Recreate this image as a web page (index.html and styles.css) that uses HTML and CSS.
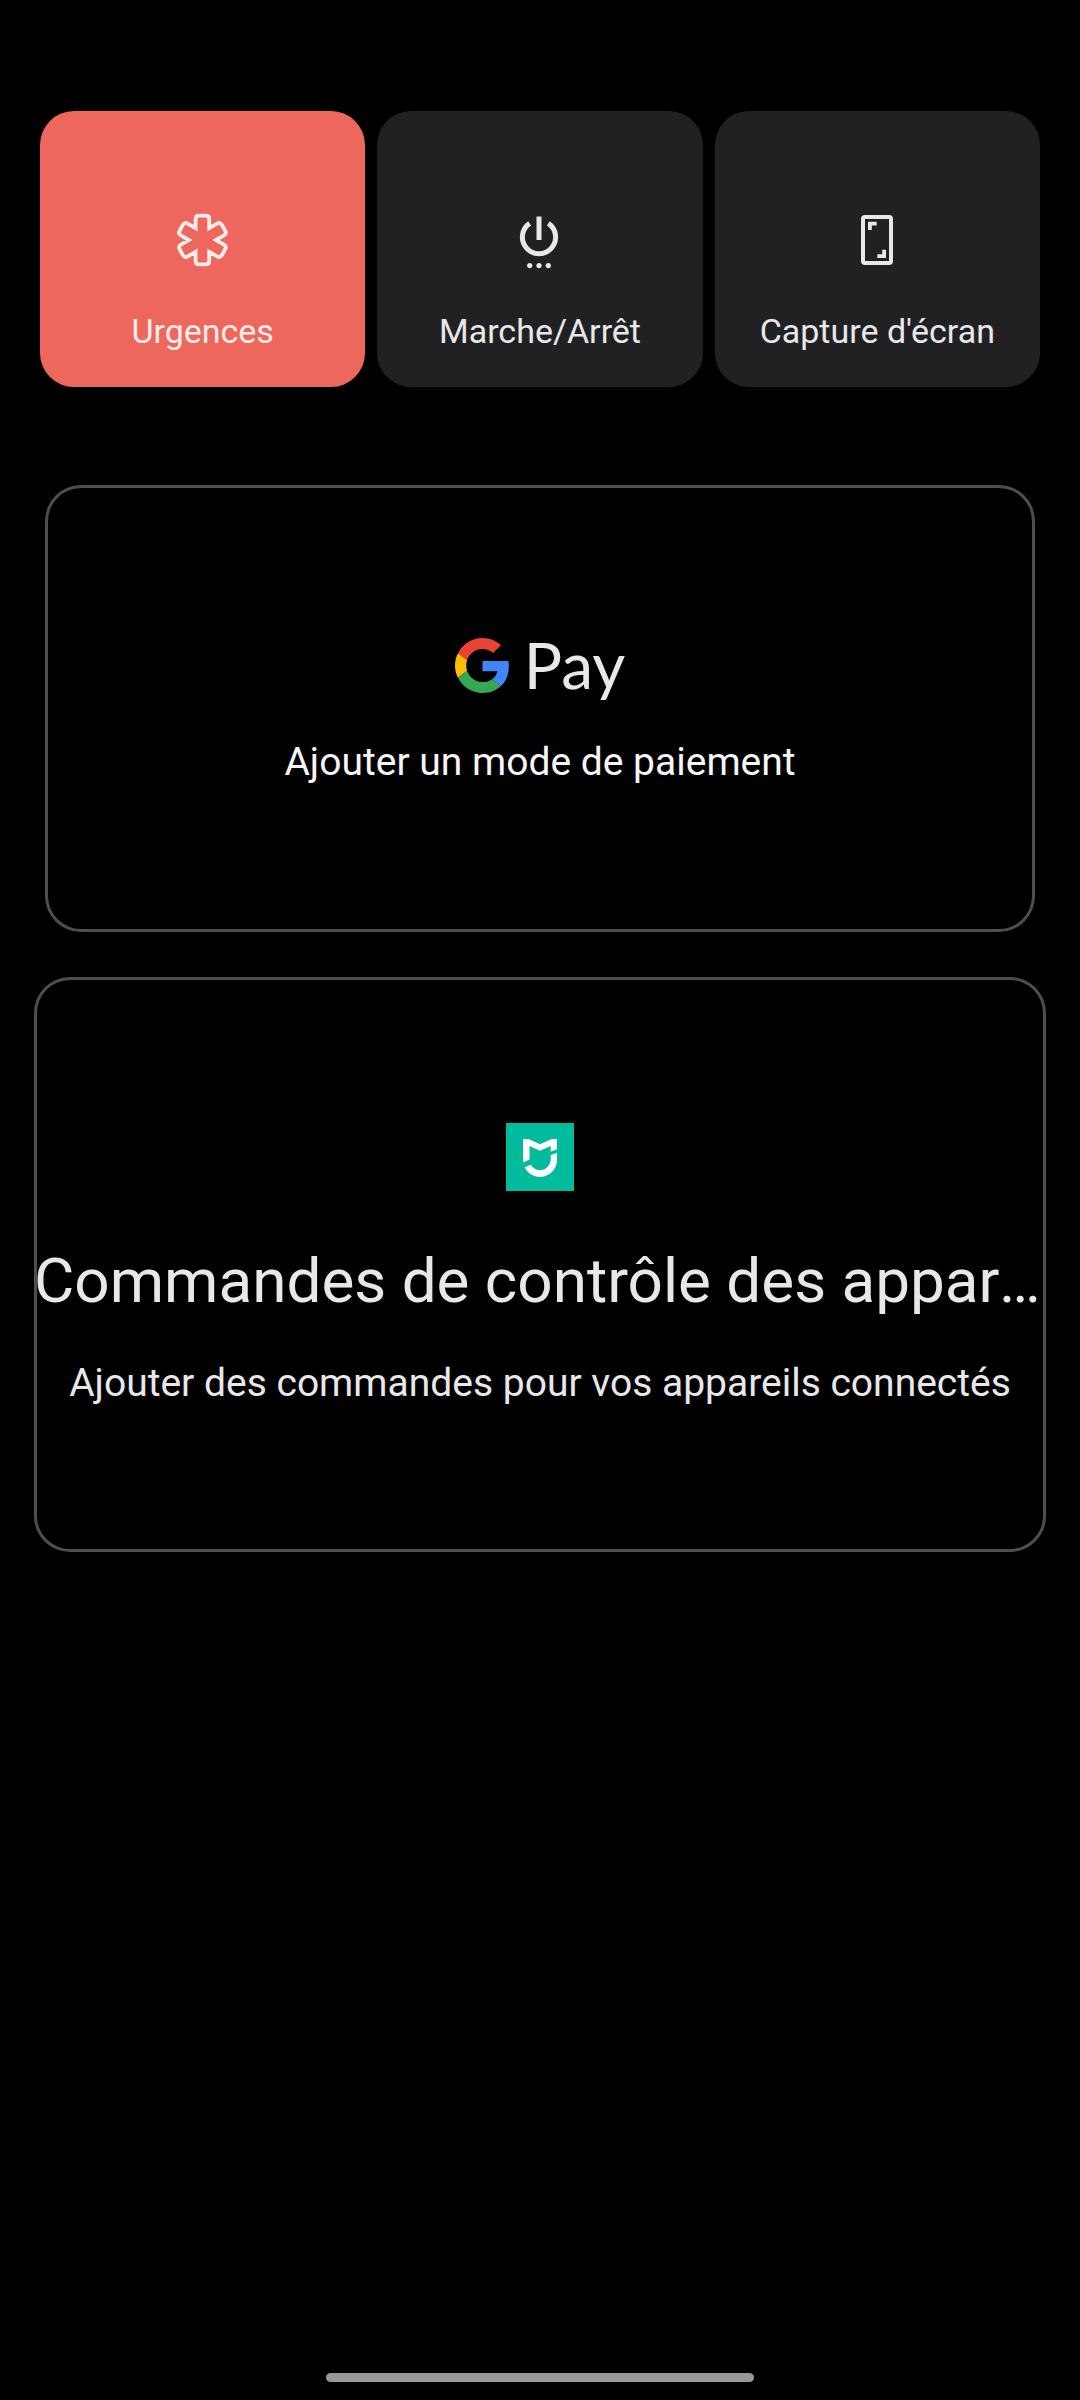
FILE: index.html
```html
<!DOCTYPE html>
<html lang="fr">
<head>
<meta charset="utf-8">
<meta name="viewport" content="width=device-width, initial-scale=1">
<title>Menu Marche/Arrêt</title>
<link rel="stylesheet" href="styles.css">
</head>
<body>
<main class="menu">
  <div class="tiles">
    <button class="tile tile-emergency" type="button">
      <svg class="tile-icon" viewBox="0 0 66 66" aria-hidden="true">
        <path transform="translate(32.4 33)" fill="none" stroke="currentColor" stroke-width="3.8" d="M-6.8-11.8V-20.9Q-6.8-24.4-3.3-24.4H3.3Q6.8-24.4 6.8-20.9V-11.8L14.7-16.3Q17.7-18.1 19.5-15.1L22.8-9.3Q24.5-6.3 21.5-4.6L13.6 0L21.5 4.6Q24.5 6.3 22.8 9.3L19.5 15.1Q17.7 18.1 14.7 16.3L6.8 11.8V20.9Q6.8 24.4 3.3 24.4H-3.3Q-6.8 24.4-6.8 20.9V11.8L-14.7 16.3Q-17.7 18.1-19.5 15.1L-22.8 9.3Q-24.5 6.3-21.5 4.6L-13.6 0L-21.5-4.6Q-24.5-6.3-22.8-9.3L-19.5-15.1Q-17.7-18.1-14.7-16.3Z"/>
      </svg>
      <span class="tile-label">Urgences</span>
    </button>
    <button class="tile" type="button">
      <svg class="tile-icon" viewBox="0 0 66 66" aria-hidden="true">
        <g transform="translate(-1 0)">
          <path fill="none" stroke="currentColor" stroke-width="5" d="M33 9.5V33M23.6 16.4A16.6 16.6 0 1 0 42.4 16.4"/>
          <circle fill="currentColor" cx="23.7" cy="58.6" r="2.6"/>
          <circle fill="currentColor" cx="33" cy="58.6" r="2.6"/>
          <circle fill="currentColor" cx="42.3" cy="58.6" r="2.6"/>
        </g>
      </svg>
      <span class="tile-label">Marche/Arrêt</span>
    </button>
    <button class="tile" type="button">
      <svg class="tile-icon" viewBox="0 0 66 66" aria-hidden="true">
        <rect fill="none" stroke="currentColor" stroke-width="4" x="19" y="10" width="28" height="46" rx="2"/>
        <path fill="currentColor" d="M24 14.7H32.7V18.5H27.8V23H24ZM42 51H33.3V47.2H38.2V42.7H42Z"/>
      </svg>
      <span class="tile-label">Capture d'écran</span>
    </button>
  </div>

  <button class="card card-pay" type="button">
    <span class="pay-logo">
      <svg class="pay-mark" viewBox="0 0 48 48" aria-hidden="true">
        <path fill="#ea4335" d="M24 9.5c3.54 0 6.71 1.22 9.21 3.6l6.85-6.85C35.9 2.38 30.47 0 24 0 14.62 0 6.51 5.38 2.56 13.22l7.98 6.19C12.43 13.72 17.74 9.5 24 9.5z"/>
        <path fill="#4285f4" d="M46.98 24.55c0-1.57-.15-3.09-.38-4.55H24v9.02h12.94c-.58 2.96-2.26 5.48-4.78 7.18l7.73 6c4.51-4.18 7.09-10.36 7.09-17.65z"/>
        <path fill="#fbbc05" d="M10.53 28.59c-.48-1.45-.76-2.99-.76-4.59s.27-3.14.76-4.59l-7.98-6.19C.92 16.46 0 20.12 0 24c0 3.88.92 7.54 2.56 10.78l7.97-6.19z"/>
        <path fill="#34a853" d="M24 48c6.48 0 11.93-2.13 15.89-5.81l-7.73-6c-2.15 1.45-4.92 2.3-8.16 2.3-6.26 0-11.57-4.22-13.47-9.91l-7.98 6.19C6.51 42.62 14.62 48 24 48z"/>
      </svg>
      <span class="pay-name">Pay</span>
    </span>
    <span class="card-text card-text-bright">Ajouter un mode de paiement</span>
  </button>

  <button class="card card-controls" type="button">
    <svg class="home-logo" viewBox="0 0 68 68" aria-hidden="true">
      <rect width="68" height="68" fill="#00bc9c"/>
      <path fill="#fff" d="M17 16H22.5L34 21.3L45.8 16H51V26.3L44.7 28.7V23L34 27.7L23.5 23V36.5L17 39.5ZM51 29.7V37A17 17 0 0 1 18.7 44.3L24.7 41.7A10.7 10.7 0 0 0 44.7 37V32.3Z"/>
    </svg>
    <span class="card-title">Commandes de contrôle des appareils</span>
    <span class="card-text">Ajouter des commandes pour vos appareils connectés</span>
  </button>
</main>
<footer class="nav"><div class="nav-handle"></div></footer>
</body>
</html>
```

FILE: styles.css
```css
* {
  box-sizing: border-box;
}

body {
  margin: 0;
  min-height: 100vh;
  display: flex;
  flex-direction: column;
  background: #000;
  color: #e8e8ea;
  font-family: Roboto, "Noto Sans", sans-serif;
}

button {
  margin: 0;
  padding: 0;
  border: 0;
  background: none;
  color: inherit;
  font: inherit;
}

.menu {
  flex: 1;
  display: flex;
  flex-direction: column;
  padding: 111px 34px 48px;
}

.tiles {
  display: grid;
  grid-template-columns: repeat(3, 1fr);
  gap: 12px;
  margin: 0 6px 98px;
}

.tile {
  display: flex;
  flex-direction: column;
  align-items: center;
  gap: 38px;
  padding: 96px 8px 36px;
  border-radius: 34px;
  background: #212124;
}

.tile-emergency {
  background: #ee675c;
  color: #ffeceb;
}

.tile-icon {
  width: 66px;
  height: 66px;
}

.tile-label {
  font-size: 34px;
  line-height: 40px;
}

.card {
  display: flex;
  flex-direction: column;
  align-items: center;
  border-radius: 36px;
  box-shadow: inset 0 0 0 3px #4e4e4e;
}

.card-pay {
  gap: 39px;
  margin: 0 11px 45px;
  padding: 144px 20px 148px;
}

.card-controls {
  padding: 146px 0 147px;
}

.pay-logo {
  display: flex;
  align-items: center;
  gap: 14px;
}

.pay-mark {
  width: 55px;
  height: 55px;
}

.pay-name {
  font-family: Lato, Roboto, sans-serif;
  font-size: 64px;
  line-height: 72px;
}

.card-text {
  font-size: 39px;
  line-height: 44px;
}

.card-text-bright {
  color: #f6f6f6;
}

.home-logo {
  width: 68px;
  height: 68px;
  margin-bottom: 53px;
}

.card-title {
  max-width: 100%;
  margin-bottom: 43px;
  overflow: hidden;
  font-size: 62px;
  line-height: 74px;
  text-overflow: ellipsis;
  white-space: nowrap;
}

.nav {
  display: flex;
  justify-content: center;
  padding-bottom: 18px;
}

.nav-handle {
  width: 428px;
  height: 9px;
  border-radius: 5px;
  background: #999;
}
```
